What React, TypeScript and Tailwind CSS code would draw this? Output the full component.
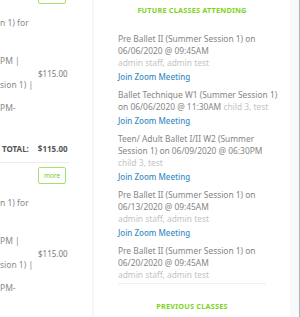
const font = { fontFamily: "'Noto Sans', 'Liberation Sans', sans-serif" };

interface ClassEntry {
  lines: string[];
  meta?: string;
  inlineMeta?: boolean;
}

const futureClasses: ClassEntry[] = [
  { lines: ["Pre Ballet II (Summer Session 1) on", "06/06/2020 @ 09:45AM"], meta: "admin staff, admin test" },
  { lines: ["Ballet Technique W1 (Summer Session 1)", "on 06/06/2020 @ 11:30AM"], meta: "child 3, test", inlineMeta: true },
  { lines: ["Teen/ Adult Ballet I/II W2 (Summer", "Session 1) on 06/09/2020 @ 06:30PM"], meta: "child 3, test" },
  { lines: ["Pre Ballet II (Summer Session 1) on", "06/13/2020 @ 09:45AM"], meta: "admin staff, admin test" },
  { lines: ["Pre Ballet II (Summer Session 1) on", "06/20/2020 @ 09:45AM"], meta: "admin staff, admin test" },
];

function MoreButton() {
  return (
    <div className="flex justify-end pr-[26px]">
      <div className="flex h-[17px] w-[28px] items-center justify-center rounded-[2px] border border-[#a6e06a] text-[6.5px] text-[#7cc63a]">
        more
      </div>
    </div>
  );
}

function OrderItem() {
  return (
    <div className="flex text-[8.5px] leading-[12px] text-[#8a8a8a]">
      <div className="flex w-[38px] flex-col">
        <div className="mt-[13px] whitespace-nowrap">n 1) for</div>
        <div className="mt-[26px] whitespace-nowrap">PM |</div>
        <div className="mt-[12px] whitespace-nowrap">sion 1) |</div>
        <div className="mt-[11px] whitespace-nowrap">PM-</div>
      </div>
      <div className="mt-[64px] w-[28px] whitespace-nowrap text-right text-[8px] text-[#7a7a7a]">$115.00</div>
    </div>
  );
}

function FutureEntry({ entry, last }: { entry: ClassEntry; last: boolean }) {
  return (
    <div className={last ? "" : "mb-[6px]"}>
      {entry.lines.map((line, i) => (
        <div key={i} className="h-[12px] whitespace-nowrap">
          {line}
          {entry.inlineMeta && i === entry.lines.length - 1 ? (
            <span className="text-[#c4c4c4]"> {entry.meta}</span>
          ) : null}
        </div>
      ))}
      {!entry.inlineMeta && entry.meta ? (
        <div className="h-[12px] whitespace-nowrap text-[#c4c4c4]">{entry.meta}</div>
      ) : null}
      {!last ? (
        <div className="mt-[2px] h-[12px] text-[8px] font-medium text-[#3a8cc4]">Join Zoom Meeting</div>
      ) : null}
    </div>
  );
}

export default function App() {
  return (
    <div className="flex h-[317px] w-[300px] overflow-hidden bg-[#f6f6f6]" style={font}>
      <div className="w-[92px] shrink-0 bg-white">
        <div className="mt-[-13px]">
          <MoreButton />
          <OrderItem />
          <div className="mt-[29px] flex h-[12px] items-center text-[8px] font-bold text-[#555]">
            <span className="pl-[2px]">TOTAL:</span>
            <span className="ml-[9px]">$115.00</span>
          </div>
          <div className="mt-[7px] h-px w-[69px] bg-[#ececec]" />
          <div className="mt-[4px]">
            <MoreButton />
            <OrderItem />
          </div>
        </div>
      </div>
      <div className="ml-[2px] w-[196px] shrink-0 bg-white px-[24px]">
        <div className="mt-[5px] text-center text-[7.3px] font-bold tracking-[0.2px] text-[#7ed321]">
          FUTURE CLASSES ATTENDING
        </div>
        <div className="mt-[17px] text-[8.4px] leading-[12px] text-[#858585]">
          {futureClasses.map((entry, i) => (
            <FutureEntry key={i} entry={entry} last={i === futureClasses.length - 1} />
          ))}
        </div>
        <div className="mt-[2px] h-px bg-[#f0f0f0]" />
        <div className="mt-[17px] text-center text-[7.3px] font-bold tracking-[0.2px] text-[#7ed321]">
          PREVIOUS CLASSES
        </div>
      </div>
      <div className="w-[9px] shrink-0 bg-[#f9f9f9]" />
      <div className="w-px shrink-0 bg-[#a8b8b8]" />
    </div>
  );
}
